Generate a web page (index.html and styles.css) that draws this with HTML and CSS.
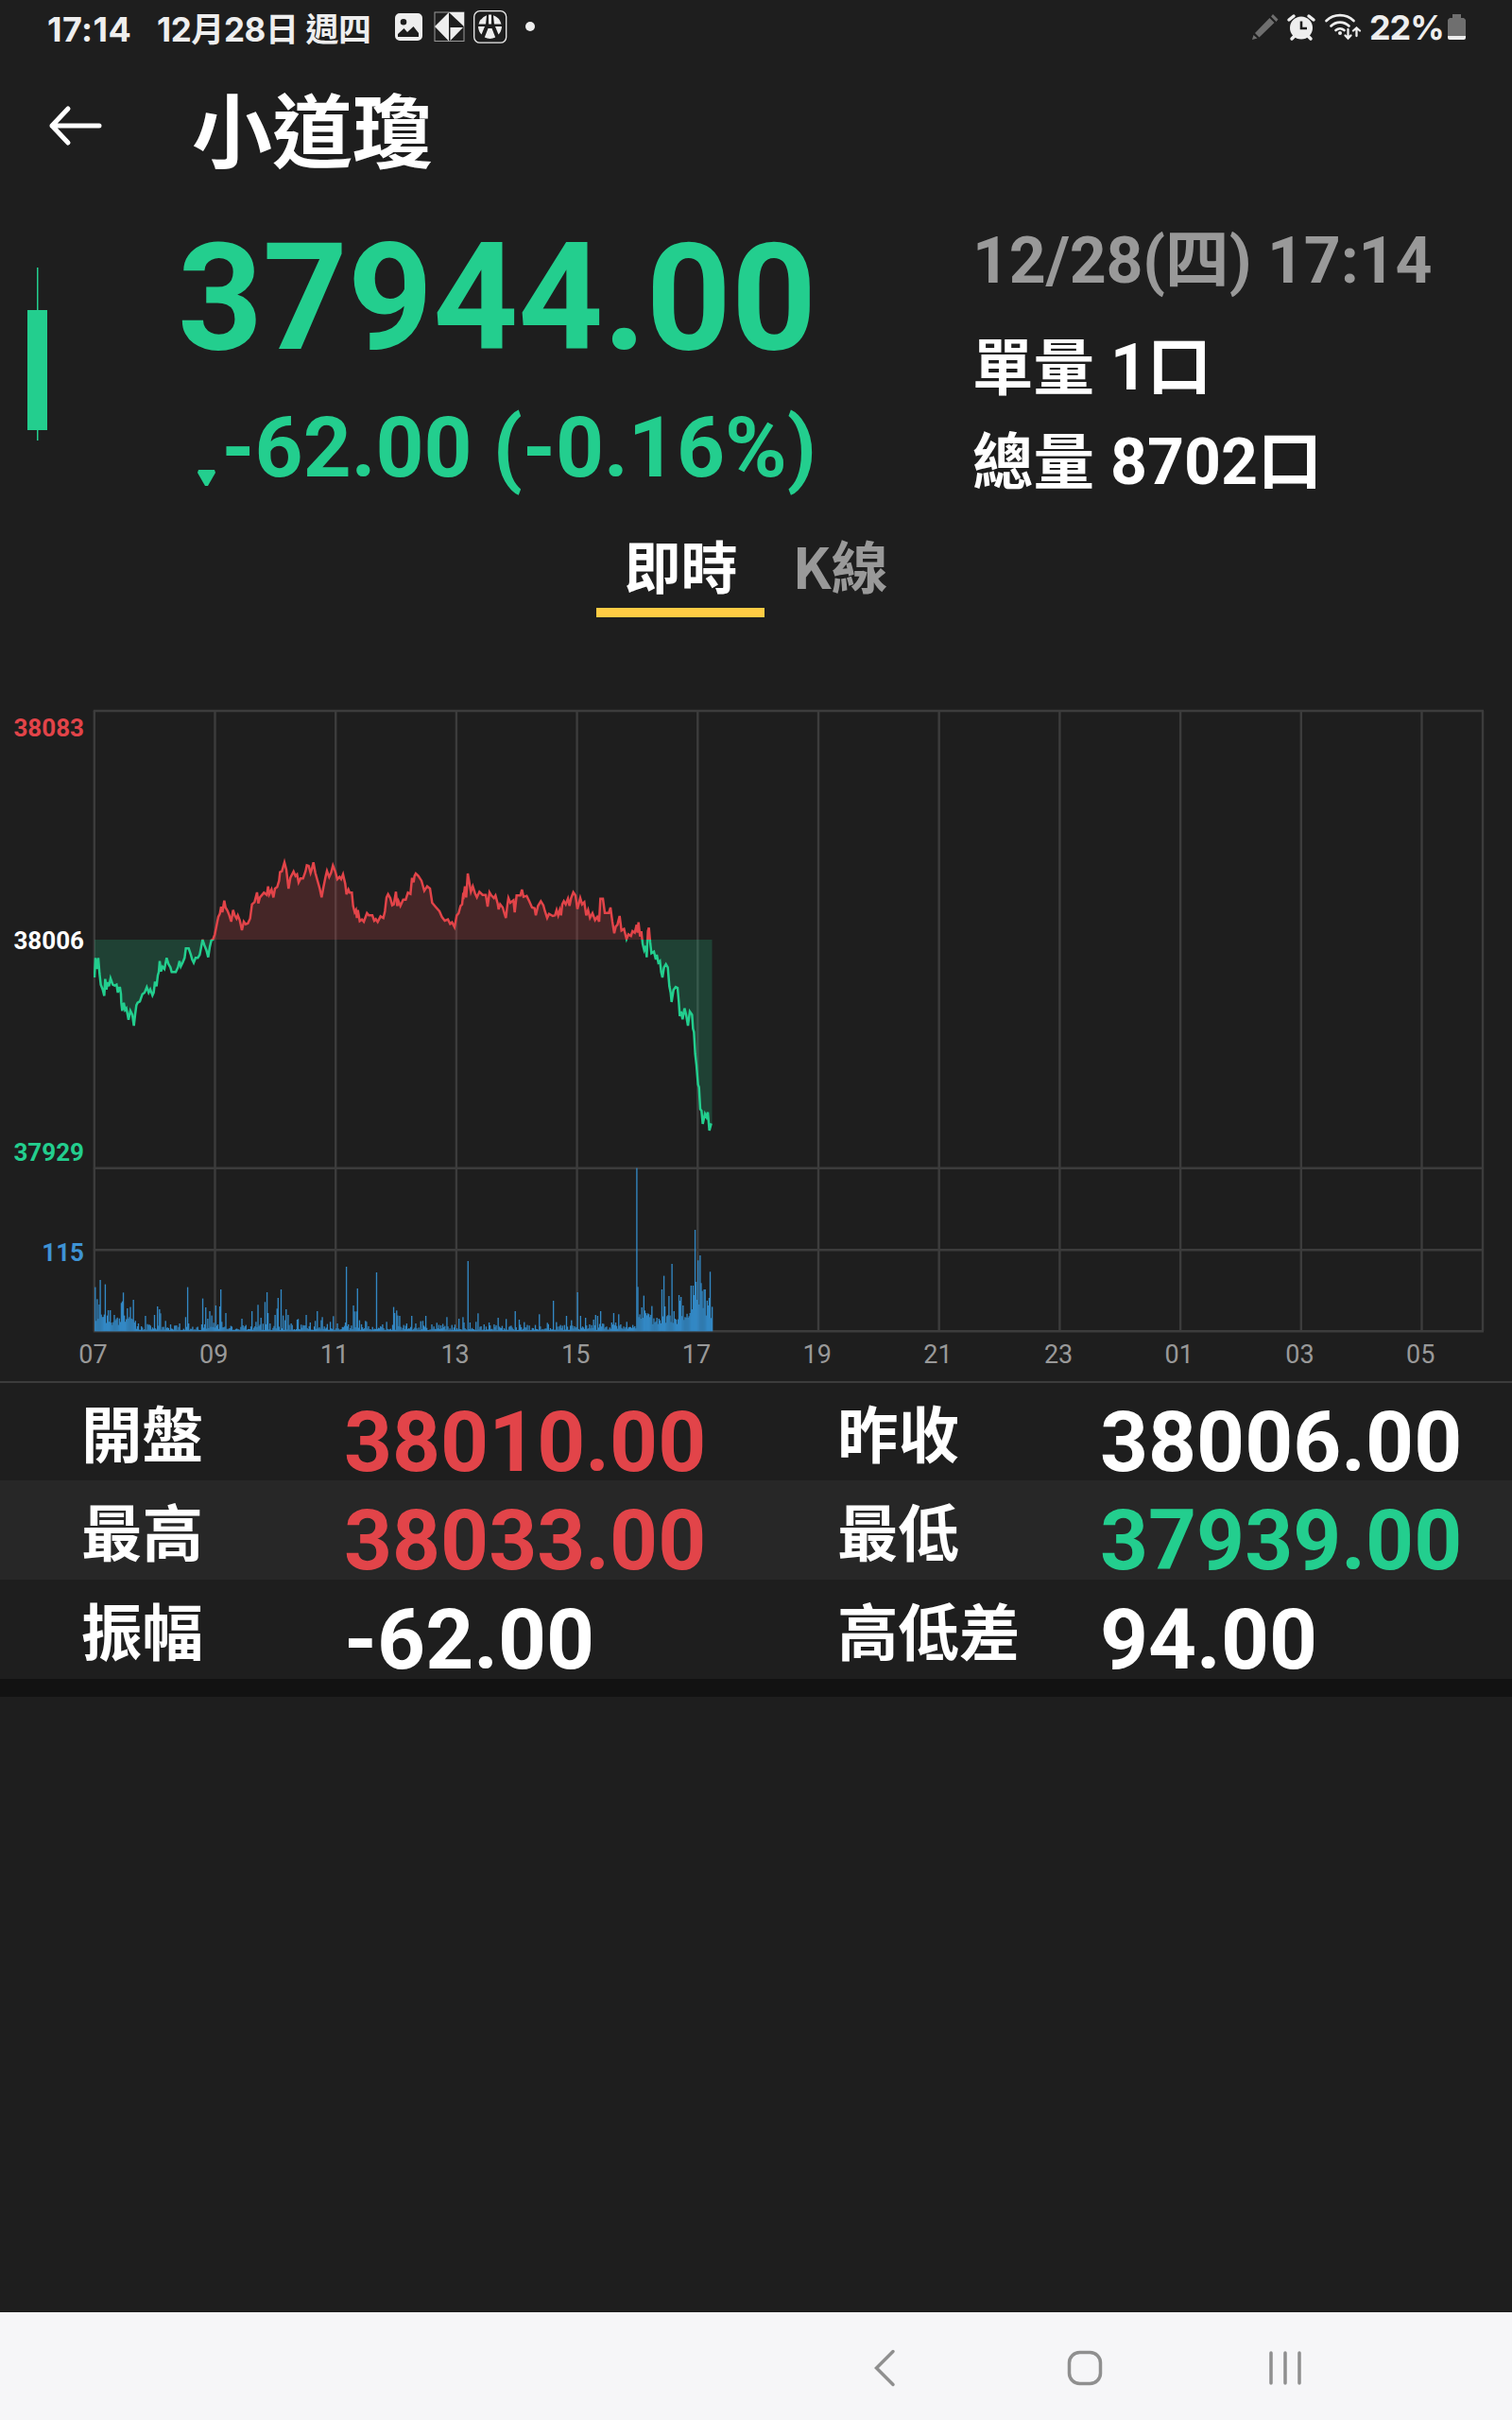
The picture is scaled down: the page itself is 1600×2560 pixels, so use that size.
FILE: index.html
```html
<!DOCTYPE html>
<html lang="zh-Hant">
<head>
  <meta charset="UTF-8" />
  <meta name="viewport" content="width=device-width, initial-scale=1.0"/>
  <title>小道瓊</title>
  <link rel="stylesheet" href="styles.css">
</head>
<body>
  <div class="app">
    <!-- Status bar -->
    <div class="status-bar">
      <span class="status-time">17:14</span>
      <span class="status-date">12月28日 週四</span>
      <svg class="status-icons" width="160" height="60" viewBox="410 0 160 60">
        <path fill="#eee" fill-rule="evenodd" d="M423 14h19a5 5 0 0 1 5 5v19a5 5 0 0 1-5 5h-19a5 5 0 0 1-5-5V19a5 5 0 0 1 5-5zM427 20a3.3 3.3 0 1 0 0 6.600a3.300 3.300 0 0 0 0-6.600zM421 39h22V35l-5.500-7-6.500 6-3.500-4-6.500 6z"/>
        <rect x="460" y="13" width="31" height="30.500" fill="none" stroke="#999" stroke-width="1"/>
        <path fill="#eee" d="M475 13v30.500L460 28zM475 13h16v15zM476.500 29H490L476.500 43z"/>
        <rect x="501.700" y="11.700" width="34" height="33.500" rx="6" fill="none" stroke="#eee" stroke-width="1.300"/>
        <path fill="#eee" d="M515 16.200a13 13 0 0 0-8.500 9.300h7.500zM522 16.200a13 13 0 0 1 8.500 9.300H523zM517 15.500h3v10h-3zM506 28h7l-3.500 8.500a13 13 0 0 1-3.500-8.500zM531 28h-7l3.500 8.500a13 13 0 0 0 3.500-8.500zM516.500 30h4l3.700 9.500a13 13 0 0 1-11.400 0z"/>
        <circle cx="561" cy="28" r="5" fill="#eee"/>
      </svg>
      <svg class="status-right" width="125" height="60" viewBox="1320 0 125 60">
        <path fill="#6f6f6f" d="M1325 42l1.500-5 4 3.500zM1328 35l15.500-16 5 5-16 15.500zM1345 17.500l2-2.500 5.500 5.500-2 2.500z"/>
        <circle cx="1377" cy="29.500" r="12" fill="#eee"/>
        <path d="M1364 21l5-4M1390 21l-5-4M1367 41l3-3M1387 41l-3-3" stroke="#eee" stroke-width="3.500" stroke-linecap="round"/>
        <path d="M1377 22.500v7.500h6" fill="none" stroke="#1e1e1e" stroke-width="2.600"/>
        <path d="M1403.500 22a21 21 0 0 1 29 0M1408.500 27.500a13.500 13.500 0 0 1 19 0M1413.500 32a7 7 0 0 1 9 0" fill="none" stroke="#eee" stroke-width="2.700" stroke-linecap="round"/>
        <circle cx="1418" cy="35" r="2" fill="#eee"/>
        <path d="M1426.500 31v9.500M1423.500 37.500l3 3 3-3M1435.500 38v-8M1432 32.500l3.500-3 3.500 3" fill="none" stroke="#eee" stroke-width="2.300" stroke-linecap="round"/>
      </svg>
      <span class="status-battery">22%</span>
      <svg width="19" height="60" viewBox="1532 0 19 60">
        <path fill="#6f6f6f" d="M1537 15h9v4h3l2 2v17h-19V21l2-2h3z"/>
        <path fill="#eee" d="M1532 38h19v2a2 2 0 0 1-2 2h-15a2 2 0 0 1-2-2z"/>
      </svg>
    </div>

    <header class="header">
      <svg class="back" width="60" height="50" viewBox="0 0 60 50">
        <path d="M22 7L5 25l17 18M5 25h50" fill="none" stroke="#fff" stroke-width="5" stroke-linecap="round" stroke-linejoin="round"/>
      </svg>
      <h1>小道瓊</h1>
    </header>

    <!-- Quote -->
    <section class="quote">
      <svg class="candle" width="24" height="184" viewBox="0 0 24 184">
        <rect x="11" y="0" width="1.500" height="183"/>
        <rect x="1" y="45" width="21" height="127"/>
      </svg>
      <div class="quote-price">
        <div class="price">37944.00</div>
        <div class="change">
          <svg width="20" height="18" viewBox="0 0 20 18"><path d="M1 0h17l1 3-8 14h-3L0 3z"/></svg>
          <span>-62.00 (-0.16%)</span>
        </div>
      </div>
      <div class="quote-info">
        <div class="date">12/28(四) 17:14</div>
        <div><span class="label">單量</span> 1口</div>
        <div><span class="label">總量</span> 8702口</div>
      </div>
    </section>

    <nav class="tabs">
      <a class="tab active">即時</a>
      <a class="tab">K線</a>
    </nav>

    <svg class="chart" id="chart" width="1600" height="721" viewBox="0 740 1600 721">
      <defs>
        <clipPath id="above"><rect x="99" y="740" width="1471" height="254"/></clipPath>
        <clipPath id="below"><rect x="99" y="994" width="1471" height="260"/></clipPath>
      </defs>
      <g id="grid" class="grid"></g>
      <g id="volume" class="volume"></g>
      <g id="price"></g>
      <g class="axis-y">
        <text x="89" y="779" class="up">38083</text>
        <text x="89" y="1004" class="flat">38006</text>
        <text x="89" y="1228" class="down">37929</text>
        <text x="89" y="1334" class="vol">115</text>
      </g>
      <g id="hours" class="axis-x"></g>
    </svg>

    <section class="stats">
      <div class="row">
        <span class="name">開盤</span><span class="value up">38010.00</span>
        <span class="name">昨收</span><span class="value">38006.00</span>
      </div>
      <div class="row alt">
        <span class="name">最高</span><span class="value up">38033.00</span>
        <span class="name">最低</span><span class="value down">37939.00</span>
      </div>
      <div class="row">
        <span class="name">振幅</span><span class="value">-62.00</span>
        <span class="name">高低差</span><span class="value">94.00</span>
      </div>
    </section>

    <div class="nav-bar">
      <svg width="470" height="50" viewBox="915 2480 470 50" fill="none" stroke="#8f8f8f" stroke-width="3.500" stroke-linecap="round">
        <path d="M945 2487.500L927.500 2505l17.500 17.500"/>
        <rect x="1131.500" y="2488.500" width="33" height="33" rx="11"/>
        <path d="M1345 2489v32M1360 2489v32M1375 2489v32"/>
      </svg>
    </div>
  </div>

  <script>
    const BASE = 994;       // y of the previous close
    const BOTTOM = 1408.3;  // y of the volume axis
    const LEFT = 99.8;
    const STEP = 127.7;     // two hours

    // x, y pairs in thirds of a pixel, y measured from 860
    const prices = `300,522 303,460 307,495 312,460 316,510 320,545 326,560 331,580 334,527 338,560 342,537 346,550 351,525 358,545 364,548 370,545 374,570 378,555 381,555 384,575 385,602 388,628 393,602 397,625 401,620 405,640 408,656 414,628 420,640 425,675 429,640 433,610 437,602 444,598 452,575 459,570 466,553 472,570 477,560 484,579 488,570 492,535 497,550 501,515 504,505 507,470 511,503 516,488 522,495 529,460 535,480 541,490 545,505 558,505 565,490 570,470 574,487 580,475 586,460 590,430 599,430 606,450 610,465 615,475 621,460 628,460 634,450 638,430 643,402 649,420 655,435 661,458 666,425 671,404 676,402 682,385 688,355 693,330 698,320 702,298 706,315 712,278 716,300 722,310 728,325 734,345 740,308 745,325 751,335 755,325 761,340 768,372 774,345 780,353 787,350 794,335 800,290 808,283 816,252 820,287 825,268 832,260 838,253 847,260 851,233 855,258 862,243 868,268 873,240 880,235 886,215 889,188 895,185 903,157 909,180 916,240 922,205 932,186 938,200 943,195 948,220 954,208 962,208 970,185 974,166 980,168 986,190 990,178 995,157 1001,190 1008,215 1015,240 1021,268 1027,235 1034,200 1038,184 1045,203 1051,190 1057,167 1064,185 1071,210 1078,203 1083,210 1089,195 1096,225 1100,258 1106,243 1110,253 1117,253 1121,295 1126,315 1130,308 1133,333 1136,308 1142,343 1149,338 1155,345 1165,318 1171,325 1182,325 1188,342 1193,337 1199,346
      1208,328 1217,333 1222,312 1227,268 1232,258 1239,270 1245,293 1250,290 1257,250 1261,295 1265,280 1271,295 1280,275 1288,275 1295,253 1303,257 1308,206 1313,220 1316,200 1320,192 1328,200 1338,215 1347,247 1356,233 1365,240 1372,285 1382,297 1395,312 1403,330 1412,342 1422,338 1429,352 1435,347 1443,362 1450,325 1456,318 1462,295 1467,290 1470,262 1472,265 1476,233 1480,268 1485,192 1489,215 1495,250 1501,233 1508,255 1514,268 1522,250 1532,260 1542,260 1548,297 1554,252 1560,262 1568,270 1573,262 1580,288 1583,306 1588,290 1596,300 1601,318 1606,333 1611,290 1614,270 1620,285 1630,277 1634,315 1640,262 1652,262 1657,243 1662,266 1672,263 1680,280 1689,300 1697,302 1701,325 1708,295 1717,280 1725,293 1730,312 1737,333 1743,320 1755,327 1762,325 1767,308 1772,325 1777,308 1781,325 1785,290 1790,280 1796,290 1803,272 1808,295 1813,270 1820,252 1827,262 1833,305 1842,270 1848,290 1855,283 1861,325 1867,308 1873,333 1881,318 1889,340 1896,330 1902,345 1906,272 1914,272 1920,317 1933,317 1938,300 1944,345 1950,382 1955,360 1960,355 1967,327 1973,373 1981,368 1989,400 1995,385 2003,390 2008,375 2015,380 2021,355 2024,380 2027,347 2032,392 2036,375 2040,415 2045,435 2050,422 2053,458 2057,375 2060,364 2064,410 2068,445 2076,440 2082,465 2085,450 2090,475 2095,470 2099,505 2103,522 2108,490 2114,480 2120,490 2125,550 2129,570 2132,600 2138,562 2145,552 2151,555 2155,600 2158,645 2162,630 2167,655 2173,620 2178,640 2184,675 2190,630 2197,640 2200,685 2203,695 2207,765 2211,800 2216,862 2219,870 2223,940 2227,945 2231,987 2238,955 2243,965 2247,950 2252,1008 2258,985`
      .split(/\s+/).map(p => p.split(',').map(Number)).map(([x, y]) => [x / 3, 860 + y / 3]);

    // Busiest minutes: x and bar top, thirds of a pixel, top measured from 1200
    const peaks = `303,485 309,523 315,540 318,462 321,572 325,580 330,572 334,476 339,575 344,558 350,558 355,605 362,573 369,586 375,605 385,535 388,530 392,502 396,575 404,552 409,580 414,548 419,587 423,525 428,597 440,600 462,576 475,604 490,573 501,546 505,555 509,568 525,592 540,603 556,607 570,600 590,580 596,485 600,600 640,603 644,521 653,549 660,585 666,561 672,575 680,598 685,543 690,603 698,546 702,492 705,595 717,567 735,610 768,585 782,605 800,561 812,595 819,541 829,582 842,532 846,501 851,567 858,600 874,573 880,553 884,519 891,492 897,575 905,590 909,555 915,573 925,600 942,588 947,586 973,573 986,597 1002,592 1008,561 1020,590 1024,580 1038,602 1050,595 1058,577 1072,600 1095,597 1101,420 1106,603 1121,543 1126,562 1130,562 1133,489 1142,590 1160,592 1164,595 1196,438
      1228,595 1248,548 1253,567 1258,559 1262,575 1270,576 1282,605 1292,600 1307,576 1320,600 1335,593 1342,592 1351,576 1371,603 1388,598 1400,606 1417,580 1435,605 1456,585 1468,580 1472,597 1485,402 1492,597 1510,595 1517,568 1535,603 1552,597 1568,603 1581,582 1595,608 1608,586 1637,561 1647,588 1664,596 1675,605 1711,571 1738,598 1756,528 1765,596 1780,605 1797,576 1813,590 1833,501 1842,576 1858,582 1872,603 1885,588 1890,573 1898,576 1905,561 1925,610 1941,597 1947,567 1955,597 1964,571 1989,595 2010,605 2020,107 2024,484 2029,580 2037,549 2043,512 2047,559 2057,568 2062,580 2070,545 2078,597 2088,602 2095,590 2101,492 2107,449 2110,546 2117,577 2123,513 2128,575 2133,411 2138,561 2148,602 2155,510 2158,528 2161,516 2168,543 2174,580 2185,582 2190,567 2195,480 2199,480 2203,510 2206,303 2209,468 2213,525 2216,400 2222,384 2226,472 2230,497 2234,492 2237,492 2242,575 2247,543 2251,519 2254,436 2258,583`
      .split(/\s+/).map(p => p.split(',').map(Number));

    // Grid lines and hour labels
    let grid = '';
    let hours = '';
    for (let i = 0; i < 12; i++) {
      const x = LEFT + i * STEP;
      grid += `<path d="M${x} 752V1408.300"/>`;
      const label = String((7 + i * 2) % 24).padStart(2, '0');
      hours += `<text x="${x - 1.3}" y="1441.500">${label}</text>`;
    }
    grid += '<path d="M1569 752V1408.300"/>';
    [752, 1235.8, 1322.3, 1408.3].forEach(y => {
      grid += `<path d="M98.800 ${y}H1570"/>`;
    });
    document.getElementById('grid').innerHTML = grid;
    document.getElementById('hours').innerHTML = hours;

    // Price line, red above the previous close and green below
    const line = prices.map(p => p.join(',')).join(' ');
    const area = `100,${BASE} ${line} 753.500,${prices[prices.length - 1][1]} 753.500,${BASE}`;
    document.getElementById('price').innerHTML = ['above', 'below'].map(side => `
      <g class="${side}" clip-path="url(#${side})">
        <polygon points="${area}"/>
        <polyline points="${line}"/>
      </g>`).join('');

    // Volume, one bar per minute
    let seed = 7;
    function random() {
      seed = (seed * 16807) % 2147483647;
      return seed / 2147483647;
    }
    const bars = new Map();
    for (let m = 0; m < 615; m++) {
      const x = m * 3.19 + 302;
      let h = 4 + 22 * random() * random();
      if (x < 430) h += 16 + 18 * random();
      if (x > 1850 && x < 2020) h += 8 * random();
      if (x > 2020) h = 22 + 36 * random();
      if (x > 2190) h += 40;
      bars.set(m, h);
    }
    peaks.forEach(([x, y]) => {
      bars.set(Math.round((x - 302) / 3.19), 625 - y);
    });
    let volume = '';
    bars.forEach((h, m) => {
      const x = 100.1 + m * 1.0633;
      volume += `<rect x="${x.toFixed(2)}" y="${(BOTTOM - h / 3).toFixed(1)}" width="1.350" height="${(h / 3).toFixed(1)}"/>`;
    });
    document.getElementById('volume').innerHTML = volume;
  </script>
</body>
</html>
```
FILE: styles.css
```css
* {
  box-sizing: border-box;
}

body {
  margin: 0;
  background-color: #1e1e1e;
  color: #fff;
  font-family: Roboto, "Noto Sans CJK TC", sans-serif;
  font-weight: 700;
}

.app {
  width: 1600px;
  height: 2560px;
  display: flex;
  flex-direction: column;
  overflow: hidden;
}

svg {
  display: block;
  flex-shrink: 0;
}

/* Status bar */
.status-bar {
  display: flex;
  height: 60px;
  padding: 0 49px 0 50px;
  color: #eee;
  font-family: Inter, "Noto Sans CJK TC", sans-serif;
  font-size: 36px;
  font-weight: 700;
  line-height: 62px;
  white-space: nowrap;
}

.status-time {
  width: 116px;
  letter-spacing: 0.4px;
}

.status-date {
  width: 244px;
  font-size: 35px;
  letter-spacing: -0.4px;
}

.status-right {
  margin-left: auto;
}

.status-battery {
  width: 87px;
  padding-left: 4px;
  letter-spacing: -1.1px;
  line-height: 58px;
}

/* Header */
.header {
  display: flex;
  height: 162px;
  padding-left: 50px;
}

.back {
  margin-top: 48px;
}

h1 {
  margin: 0 0 0 93px;
  font-size: 85px;
  font-weight: 700;
  line-height: 165px;
}

.up {
  color: #e24449;
  fill: #e24449;
}

.down {
  color: #23ce8e;
  fill: #23ce8e;
}

.flat {
  fill: #fff;
}

/* Quote */
.quote {
  display: flex;
  height: 340px;
}

.candle {
  margin: 61px 0 0 28px;
  fill: #23ce8e;
}

.quote-price {
  width: 812px;
  color: #23ce8e;
  text-align: right;
}

.price {
  font-size: 157px;
  line-height: 187px;
}

.change {
  display: flex;
  justify-content: flex-end;
  margin-top: 11px;
  font-size: 89px;
  line-height: 107px;
}

.change svg {
  margin: 77px 6px 0 0;
  fill: #23ce8e;
}

.quote-info {
  padding: 5px 0 0 165px;
  font-size: 68px;
  line-height: 99px;
  white-space: nowrap;
}

.quote-info .label {
  font-size: 64.5px;
}

.date {
  margin-bottom: 14px;
  color: #999;
  letter-spacing: -0.2px;
}

/* Tabs */
.tabs {
  display: flex;
  justify-content: center;
  height: 178px;
}

.tab {
  height: 91px;
  padding: 0 29px;
  color: #999;
  font-family: "Noto Sans CJK TC", sans-serif;
  font-size: 60px;
  line-height: 70px;
}

.tab.active {
  color: #fff;
  border-bottom: 10px solid #ffcc44;
}

/* Chart */
.grid path {
  stroke: #3c3c3c;
  stroke-width: 2.4;
}

.above polygon {
  fill: #e24449;
  fill-opacity: 0.2;
}

.above polyline {
  fill: none;
  stroke: #e24449;
  stroke-width: 2.5;
}

.below polygon {
  fill: #23ce8e;
  fill-opacity: 0.2;
}

.below polyline {
  fill: none;
  stroke: #23ce8e;
  stroke-width: 2.5;
}

.volume rect {
  fill: #3388c4;
}

.axis-y text {
  font-size: 26px;
  text-anchor: end;
}

.axis-y .vol {
  fill: #3e93d4;
}

.axis-x text {
  fill: #999;
  font-size: 27px;
  font-weight: 400;
  text-anchor: middle;
}

/* Stats */
.stats {
  border-top: 2px solid #3c3c3c;
  border-bottom: 19px solid #121212;
}

.row {
  display: grid;
  grid-template-columns: 278px 522px 278px 1fr;
  height: 105px;
  padding-left: 86px;
  line-height: 105px;
}

.row:first-child {
  height: 103px;
  line-height: 103px;
}

.row.alt {
  background-color: #272727;
}

.name {
  padding-top: 6px;
  font-size: 64.5px;
}

.value {
  padding-top: 11px;
  font-size: 89px;
}

/* System navigation */
.nav-bar {
  display: flex;
  align-items: center;
  height: 114px;
  margin-top: auto;
  padding: 4px 0 0 915px;
  background-color: #f6f6f8;
}
```
